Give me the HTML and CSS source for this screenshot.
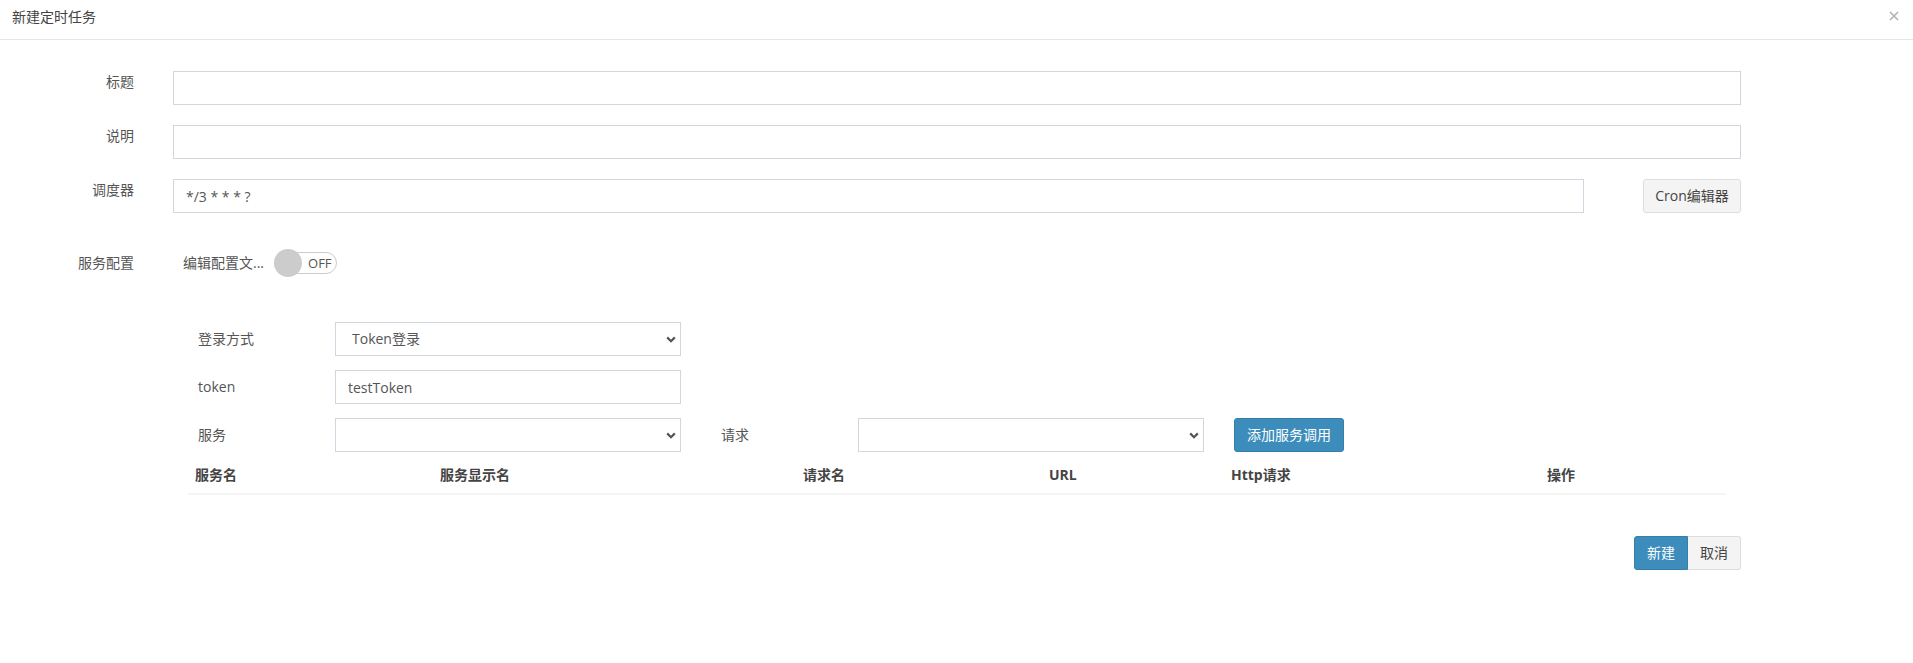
FILE: index.html
```html
<!DOCTYPE html>
<html lang="zh-CN">
<head>
    <meta charset="UTF-8">
    <meta name="viewport" content="width=device-width, initial-scale=1.0">
    <title>新建定时任务</title>
    <link rel="stylesheet" href="styles.css">
</head>
<body>
    <div class="modal">
        <div class="modal-header">
            <span class="modal-title">新建定时任务</span>
            <span class="close">
                <svg width="10" height="10" viewBox="0 0 10 10"><path d="M1 1L9 9M9 1L1 9" stroke="#b3b3b3" stroke-width="1.6" fill="none"/></svg>
            </span>
        </div>

        <div class="modal-body">
            <div class="form-row">
                <label class="form-label">标题</label>
                <div class="form-field"><input class="form-control" type="text"></div>
            </div>
            <div class="form-row">
                <label class="form-label">说明</label>
                <div class="form-field"><input class="form-control" type="text"></div>
            </div>
            <div class="form-row cron-row">
                <label class="form-label">调度器</label>
                <div class="form-field">
                    <input class="form-control" type="text" value="*/3 * * * ?">
                    <button class="btn btn-default cron-btn">Cron编辑器</button>
                </div>
            </div>
            <div class="form-row config-row">
                <label class="form-label">服务配置</label>
                <div class="form-field switch-field">
                    <span class="switch-text">编辑配置文...</span>
                    <span class="switch"><span class="knob"></span><span class="switch-label">OFF</span></span>
                </div>
            </div>

            <!-- service call config -->
            <div class="sub-form">
                <div class="sub-row">
                    <label class="sub-label">登录方式</label>
                    <div class="select-wrap">
                        <select class="form-control"><option>Token登录</option></select>
                        <svg class="caret" width="10" height="7" viewBox="0 0 10 7"><path d="M1.2 1.4L5 5.2L8.8 1.4" stroke="#555" stroke-width="2.2" fill="none"/></svg>
                    </div>
                </div>
                <div class="sub-row">
                    <label class="sub-label">token</label>
                    <div class="select-wrap"><input class="form-control" type="text" value="testToken"></div>
                </div>
                <div class="sub-row last">
                    <label class="sub-label">服务</label>
                    <div class="select-wrap">
                        <select class="form-control"><option></option></select>
                        <svg class="caret" width="10" height="7" viewBox="0 0 10 7"><path d="M1.2 1.4L5 5.2L8.8 1.4" stroke="#555" stroke-width="2.2" fill="none"/></svg>
                    </div>
                    <label class="sub-label second">请求</label>
                    <div class="select-wrap">
                        <select class="form-control"><option></option></select>
                        <svg class="caret" width="10" height="7" viewBox="0 0 10 7"><path d="M1.2 1.4L5 5.2L8.8 1.4" stroke="#555" stroke-width="2.2" fill="none"/></svg>
                    </div>
                    <button class="btn btn-primary add-btn">添加服务调用</button>
                </div>
            </div>

            <table class="call-table">
                <colgroup>
                    <col class="c-name"><col class="c-display"><col class="c-req">
                    <col class="c-url"><col class="c-http"><col class="c-op">
                </colgroup>
                <thead>
                    <tr>
                        <th>服务名</th>
                        <th>服务显示名</th>
                        <th>请求名</th>
                        <th>URL</th>
                        <th>Http请求</th>
                        <th>操作</th>
                    </tr>
                </thead>
                <tbody></tbody>
            </table>

            <div class="modal-footer">
                <div class="btn-group">
                    <button class="btn btn-primary">新建</button>
                    <button class="btn btn-default">取消</button>
                </div>
            </div>
        </div>
    </div>
</body>
</html>
```

FILE: styles.css
```css
body {
    margin: 0;
    font-family: "Open Sans", "Noto Sans CJK SC", sans-serif;
    font-size: 14px;
    line-height: 20px;
    color: #333;
    background-color: #fff;
}

.modal {
    width: 100%;
}

.modal-header {
    display: flex;
    justify-content: space-between;
    align-items: center;
    padding: 7px 14px 12px 12px;
    border-bottom: 1px solid #e5e5e5;
}

.modal-title {
    color: #444;
}

.close {
    display: flex;
    margin-top: -3px;
}

.modal-body {
    padding: 31px 172px 40px 0;
}

.form-row {
    display: flex;
    align-items: flex-start;
    margin-bottom: 20px;
}

.form-label {
    width: 134px;
    flex-shrink: 0;
    text-align: right;
    padding-top: 1px;
    color: #555;
}

.form-field {
    flex: 1;
    display: flex;
    margin-left: 39px;
}

.form-control {
    display: block;
    width: 100%;
    height: 34px;
    box-sizing: border-box;
    padding: 6px 12px;
    border: 1px solid #d2d6de;
    border-radius: 0;
    background-color: #fff;
    font: inherit;
    color: #555;
    outline: none;
}

select.form-control {
    appearance: none;
    -webkit-appearance: none;
    padding-left: 16px;
}

.btn {
    height: 34px;
    box-sizing: border-box;
    padding: 6px 12px;
    border: 1px solid transparent;
    border-radius: 3px;
    font: inherit;
    cursor: pointer;
}

.btn-default {
    background-color: #f4f4f4;
    border-color: #ddd;
    color: #444;
}

.btn-primary {
    background-color: #3c8dbc;
    border-color: #367fa9;
    color: #fff;
}

.cron-row {
    margin-bottom: 33px;
}

.cron-btn {
    width: 98px;
    flex-shrink: 0;
    margin-left: 59px;
    padding: 6px 0;
}

.config-row {
    align-items: center;
    height: 34px;
    margin-bottom: 42px;
}

.config-row .form-label {
    padding-top: 0;
}

.switch-field {
    align-items: center;
    padding-left: 10px;
}

.switch-text {
    color: #555;
}

.switch {
    position: relative;
    display: inline-block;
    width: 63px;
    height: 22px;
    box-sizing: border-box;
    margin-left: 10px;
    border: 1px solid #ccc;
    border-radius: 11px;
    background-color: #fff;
}

.knob {
    position: absolute;
    left: -1px;
    top: -4px;
    width: 28px;
    height: 28px;
    border-radius: 50%;
    background-color: #ccc;
}

.switch-label {
    display: block;
    padding-left: 33px;
    font-size: 13px;
    line-height: 20px;
    color: #555;
}

.sub-form {
    padding-left: 198px;
}

.sub-row {
    display: flex;
    align-items: center;
    margin-bottom: 14px;
}

.sub-row.last {
    margin-bottom: 6px;
}

.sub-label {
    width: 137px;
    flex-shrink: 0;
    color: #555;
}

.sub-label.second {
    margin-left: 40px;
}

.select-wrap {
    position: relative;
    width: 346px;
    flex-shrink: 0;
}

.caret {
    position: absolute;
    right: 5px;
    top: 14px;
    pointer-events: none;
}

.add-btn {
    width: 110px;
    margin-left: 30px;
    padding: 6px 0;
}

.call-table {
    margin-left: 188px;
    width: 1538px;
    border-collapse: collapse;
    table-layout: fixed;
}

.c-name { width: 245px; }
.c-display { width: 363px; }
.c-req { width: 246px; }
.c-url { width: 182px; }
.c-http { width: 316px; }
.c-op { width: 186px; }

.call-table th {
    padding: 7px 7px 8px;
    text-align: left;
    font-weight: bold;
    color: #444;
    border-bottom: 2px solid #f4f4f4;
}

.modal-footer {
    display: flex;
    justify-content: flex-end;
    margin-top: 41px;
}

.btn-group {
    display: flex;
}

.btn-group .btn:first-child {
    border-top-right-radius: 0;
    border-bottom-right-radius: 0;
}

.btn-group .btn:last-child {
    border-top-left-radius: 0;
    border-bottom-left-radius: 0;
    border-left: 0;
}
```
